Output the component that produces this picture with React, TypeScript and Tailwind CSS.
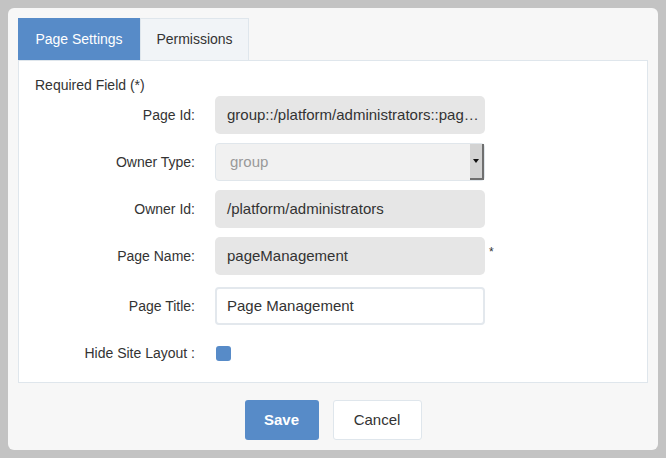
import React from "react";

const font = { fontFamily: '"Liberation Sans", Arial, sans-serif' };

function Row({ label, children, extra }: { label: string; children: React.ReactNode; extra?: React.ReactNode }) {
  return (
    <div className="flex items-center">
      <div className="w-[160px] shrink-0 text-right text-[14px] text-[#333]">{label}</div>
      <div className="ml-[20px] w-[270px]">{children}</div>
      {extra}
    </div>
  );
}

export default function App() {
  return (
    <div className="w-[666px] h-[458px] bg-[#c3c3c3] p-[8px]" style={font}>
      <div className="w-[650px] h-[442px] bg-[#f7f7f7] rounded-[6px] px-[10px] pt-[10px] flex flex-col">
        <div className="flex h-[42px]">
          <div className="w-[122px] bg-[#578bc8] text-white text-[14px] flex items-center justify-center">Page Settings</div>
          <div className="w-[109px] bg-[#f1f4f7] border border-b-0 border-[#dfe6ec] text-[#333] text-[14px] flex items-center justify-center">Permissions</div>
        </div>
        <div className="h-[323px] bg-white border border-[#dfe6ec] pl-[16px] pt-[15px]">
          <div className="text-[14px] text-[#333] leading-[18px]">Required Field (*)</div>
          <div className="flex flex-col gap-[9px] mt-[2px]">
            <Row label="Page Id:">
              <div className="h-[38px] rounded-[5px] bg-[#e6e6e6] pl-[12px] pr-[10px] flex items-center text-[15px] text-[#333] whitespace-nowrap overflow-hidden">
                group::/platform/administrators::pag…
              </div>
            </Row>
            <Row label="Owner Type:">
              <div className="h-[38px] rounded-[4px] bg-[#f1f1f1] border border-[#e0e6eb] pl-[14px] flex items-center text-[15px] text-[#999] relative">
                group
                <div className="absolute right-[0px] top-[0px] h-[36px] w-[14px] bg-[#d3d3d3] border-r-2 border-b-2 border-[#6f6f6f] flex items-center justify-center">
                  <svg width="6" height="4" viewBox="0 0 6 4"><path d="M0 0h6L3 4z" fill="#111" /></svg>
                </div>
              </div>
            </Row>
            <Row label="Owner Id:">
              <div className="h-[38px] rounded-[5px] bg-[#e6e6e6] px-[12px] flex items-center text-[15px] text-[#333]">
                /platform/administrators
              </div>
            </Row>
            <Row label="Page Name:" extra={<span className="ml-[4px] -mt-[8px] text-[12px] text-[#333]">*</span>}>
              <div className="h-[38px] rounded-[5px] bg-[#e6e6e6] px-[12px] flex items-center text-[15px] text-[#333]">
                pageManagement
              </div>
            </Row>
            <div className="mt-[3px]">
              <Row label="Page Title:">
                <div className="h-[38px] rounded-[4px] bg-white border-2 border-[#e3e8ed] px-[10px] flex items-center text-[15px] text-[#333]">
                  Page Management
                </div>
              </Row>
            </div>
            <div className="mt-[9px]">
              <Row label="Hide Site Layout :">
                <div className="ml-[1px] w-[15px] h-[15px] rounded-[3px] bg-[#578bc8]" />
              </Row>
            </div>
          </div>
        </div>
        <div className="flex justify-center gap-[14px] mt-[17px]">
          <div className="w-[74px] h-[40px] rounded-[3px] bg-[#578bc8] text-white font-bold text-[15px] flex items-center justify-center">Save</div>
          <div className="w-[89px] h-[40px] rounded-[3px] bg-white border border-[#dfe6ec] text-[#333] text-[15px] flex items-center justify-center">Cancel</div>
        </div>
      </div>
    </div>
  );
}
